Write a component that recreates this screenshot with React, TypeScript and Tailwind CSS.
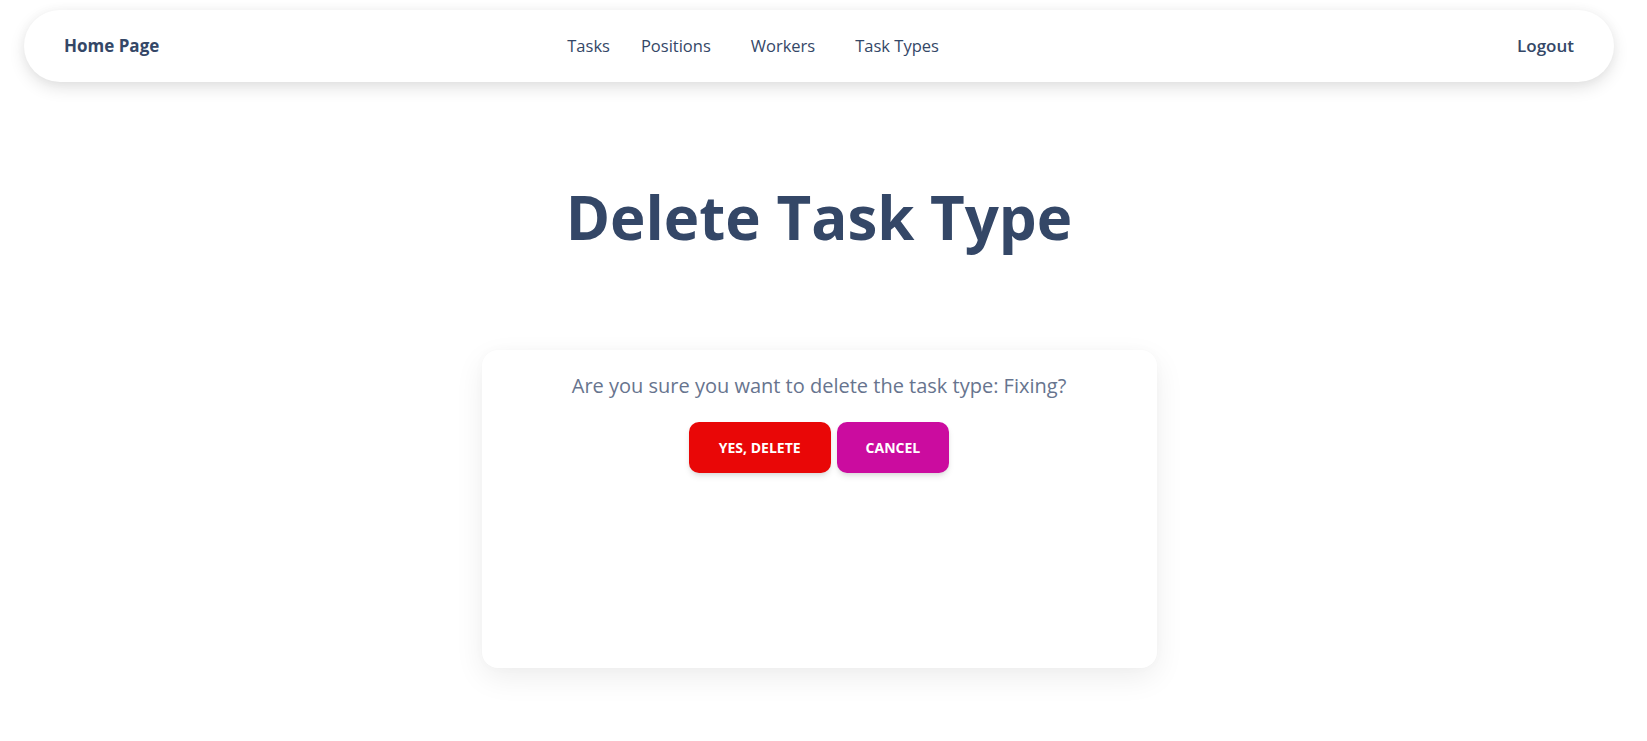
import React from "react";

const links = [
  { label: "Tasks", cls: "" },
  { label: "Positions", cls: "ml-[31px]" },
  { label: "Workers", cls: "ml-10" },
  { label: "Task Types", cls: "ml-10" },
];

function Navbar() {
  return (
    <nav className="mx-6 flex h-[72px] items-center rounded-full bg-white px-10 shadow-[0_6px_18px_-2px_rgba(0,0,0,0.14),0_0_12px_rgba(0,0,0,0.03)]">
      <a href="#" className="text-[17px] font-bold text-[#344767]">
        Home Page
      </a>
      <div className="ml-[408px] flex items-center">
        {links.map((l) => (
          <a key={l.label} href="#" className={`text-[16.5px] text-[#344767] ${l.cls}`}>
            {l.label}
          </a>
        ))}
      </div>
      <a href="#" className="ml-auto text-[17px] font-semibold text-[#344767]">
        Logout
      </a>
    </nav>
  );
}

export default function App() {
  return (
    <div className="min-h-screen bg-white pr-[9px] pt-[10px] font-['Open_Sans',sans-serif]">
      <Navbar />

      <h1 className="mt-[105px] text-center text-6xl font-bold leading-none text-[#344767]">
        Delete Task Type
      </h1>

      {/* Confirmation card */}
      <div className="mx-auto mt-[103px] h-[318px] w-[675px] rounded-2xl bg-white pt-[22px] shadow-[0_10px_30px_0_rgba(0,0,0,0.07),0_0_12px_rgba(0,0,0,0.02)]">
        <p className="text-center text-xl leading-7 text-[#67748e]">
          Are you sure you want to delete the task type: Fixing?
        </p>
        <div className="mt-[22px] flex items-center justify-center gap-[6px]">
          <button className="h-[51px] rounded-[10px] bg-[#e90707] px-[30px] text-sm font-bold uppercase text-white shadow-[0_4px_7px_-1px_rgba(0,0,0,0.11),0_2px_4px_-1px_rgba(0,0,0,0.07)]">
            Yes, Delete
          </button>
          <button className="h-[51px] rounded-[10px] bg-[#cb0c9f] px-[29px] text-sm font-bold uppercase text-white shadow-[0_4px_7px_-1px_rgba(0,0,0,0.11),0_2px_4px_-1px_rgba(0,0,0,0.07)]">
            Cancel
          </button>
        </div>
      </div>
    </div>
  );
}
